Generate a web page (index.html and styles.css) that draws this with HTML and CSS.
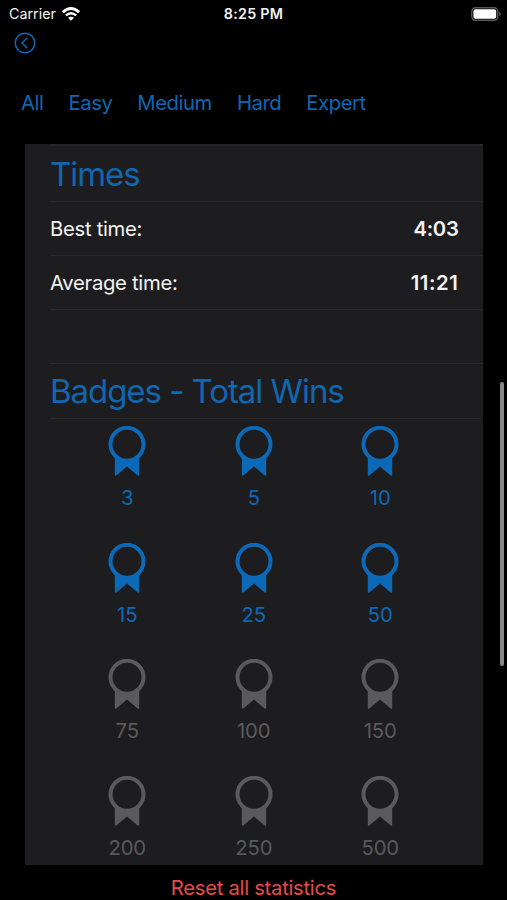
FILE: index.html
```
<!DOCTYPE html>
<html lang="en">
<head>
    <meta charset="UTF-8">
    <title>Statistics</title>
    <link rel="stylesheet" href="styles.css">
</head>
<body>
    <svg class="sprite">
        <symbol id="badge" viewBox="0 0 38 51">
            <path d="M6.8 29 L31.2 29 V48.5 Q31.2 50.6 29.4 49.3 L19 40.6 L8.6 49.3 Q6.8 50.6 6.8 48.5 Z" fill="currentColor"/>
            <circle class="hole" cx="19" cy="18.3" r="16.5" stroke="currentColor" stroke-width="4"/>
        </symbol>
    </svg>

    <header class="status">
        <div class="carrier">
            <span>Carrier</span>
            <svg class="wifi" viewBox="0 0 18 14" width="18" height="14">
                <path d="M.9 5.2 Q9 -2 17.1 5.2" fill="none" stroke="#fff" stroke-width="2.9"/>
                <path d="M3.9 8.4 Q9 4 14.1 8.4" fill="none" stroke="#fff" stroke-width="2.5"/>
                <path d="M9 13.8 L6 10.8 Q9 8.5 12 10.8 Z" fill="#fff"/>
            </svg>
        </div>
        <div class="clock">8:25 PM</div>
        <svg class="battery" viewBox="0 0 30 14" width="30" height="14">
            <rect x=".8" y=".8" width="26" height="12.4" rx="3.6" fill="none" stroke="#58585a" stroke-width="1.4"/>
            <rect x="2.4" y="2.2" width="22.8" height="9.6" rx="2" fill="#fff"/>
            <path d="M28.2 4.8 Q29.8 5.6 29.8 7 T28.2 9.2 Z" fill="#58585a"/>
        </svg>
    </header>

    <nav>
        <a class="back" href="#" aria-label="Back">
            <svg viewBox="0 0 22 22" width="22" height="22" fill="none" stroke="currentColor" stroke-width="1.5">
                <circle cx="11" cy="11" r="9.8"/>
                <path d="M12.8 6.3 L8 11 L12.8 15.7" stroke-linecap="round" stroke-linejoin="round"/>
            </svg>
        </a>
        <div class="tabs">
            <a href="#">All</a>
            <a href="#">Easy</a>
            <a href="#">Medium</a>
            <a href="#">Hard</a>
            <a href="#">Expert</a>
        </div>
    </nav>

    <main class="card">
        <h2 class="times">Times</h2>
        <div class="row"><span>Best time:</span><b>4:03</b></div>
        <div class="row"><span>Average time:</span><b class="average">11:21</b></div>
        <div class="row"></div>
        <h2>Badges - Total Wins</h2>

        <div class="badges">
            <div class="badge"><svg><use href="#badge"/></svg><span>3</span></div>
            <div class="badge"><svg><use href="#badge"/></svg><span>5</span></div>
            <div class="badge"><svg><use href="#badge"/></svg><span>10</span></div>
            <div class="badge"><svg><use href="#badge"/></svg><span>15</span></div>
            <div class="badge"><svg><use href="#badge"/></svg><span>25</span></div>
            <div class="badge"><svg><use href="#badge"/></svg><span>50</span></div>
            <div class="badge locked"><svg><use href="#badge"/></svg><span>75</span></div>
            <div class="badge locked"><svg><use href="#badge"/></svg><span>100</span></div>
            <div class="badge locked"><svg><use href="#badge"/></svg><span>150</span></div>
            <div class="badge locked"><svg><use href="#badge"/></svg><span>200</span></div>
            <div class="badge locked"><svg><use href="#badge"/></svg><span>250</span></div>
            <div class="badge locked"><svg><use href="#badge"/></svg><span>500</span></div>
        </div>
    </main>

    <a class="reset" href="#">Reset all statistics</a>
    <div class="scrollbar"></div>
</body>
</html>
```

FILE: styles.css
```
* {
    box-sizing: border-box;
}

body {
    margin: 0;
    height: 900px;
    overflow: hidden;
    position: relative;

    display: flex;
    flex-direction: column;

    font-family: Inter, Roboto, sans-serif;
    font-size: 20.3px;
    letter-spacing: -0.3px;

    background-color: #000;
    color: #f2f2f2;
}

a {
    color: #1166b0;
    text-decoration: none;
}

svg {
    display: block;
}

.sprite {
    position: absolute;
    width: 0;
    height: 0;
}

.status {
    height: 27px;
    padding: 0 6px 0 9px;
    display: grid;
    grid-template-columns: 1fr auto 1fr;
    align-items: center;
    font-size: 14.3px;
    letter-spacing: 0;
}

.carrier {
    display: flex;
    align-items: center;
    gap: 6px;
}

.clock {
    margin-right: 3px;
    font-weight: 600;
    letter-spacing: 0.25px;
}

.battery {
    justify-self: end;
}

nav {
    height: 117px;
}

.back {
    display: block;
    padding: 5px 0 0 14px;
}

.tabs {
    display: flex;
    gap: 25px;
    padding: 37px 0 0 21px;
    line-height: 24px;
    letter-spacing: -0.45px;
}

.card {
    flex: none;
    width: 457.5px;
    height: 721px;
    margin-left: 25px;
    padding-left: 25px;
    overflow: hidden;
    background-color: #1d1d1f;
}

h2 {
    height: 55px;
    margin: 0 2px 0 0;
    border-bottom: 1px solid #28282a;

    font-size: 33px;
    font-weight: 400;
    line-height: 54px;
    letter-spacing: -1.05px;
    color: #1166b0;
}

.times {
    height: 58px;
    margin-right: 0;
    padding-top: 1px;
    border-top: 2px solid #262628;
}

.row {
    height: 54px;
    padding-right: 24px;
    display: flex;
    align-items: center;
    justify-content: space-between;
    border-bottom: 1px solid #28282a;
}

.row b {
    font-weight: 600;
}

.row .average {
    letter-spacing: 0.6px;
}

.badges {
    display: grid;
    grid-template-columns: repeat(3, 126.5px);
    grid-auto-rows: 116.7px;
    padding: 7px 0 0 14px;
}

.badge {
    display: flex;
    flex-direction: column;
    align-items: center;
    color: #0b69b8;
}

.badge svg {
    width: 38px;
    height: 51px;
}

.badge span {
    margin-top: 9px;
    line-height: 24px;
    letter-spacing: -0.1px;
}

.hole {
    fill: #1d1d1f;
}

.locked {
    color: #5a5a5b;
}

.reset {
    padding-top: 11px;
    line-height: 24px;
    text-align: center;
    color: #e64b47;
}

.scrollbar {
    position: absolute;
    top: 382px;
    right: 3px;
    width: 4px;
    height: 284px;
    border-radius: 2px;
    background-color: #858585;
}
```
